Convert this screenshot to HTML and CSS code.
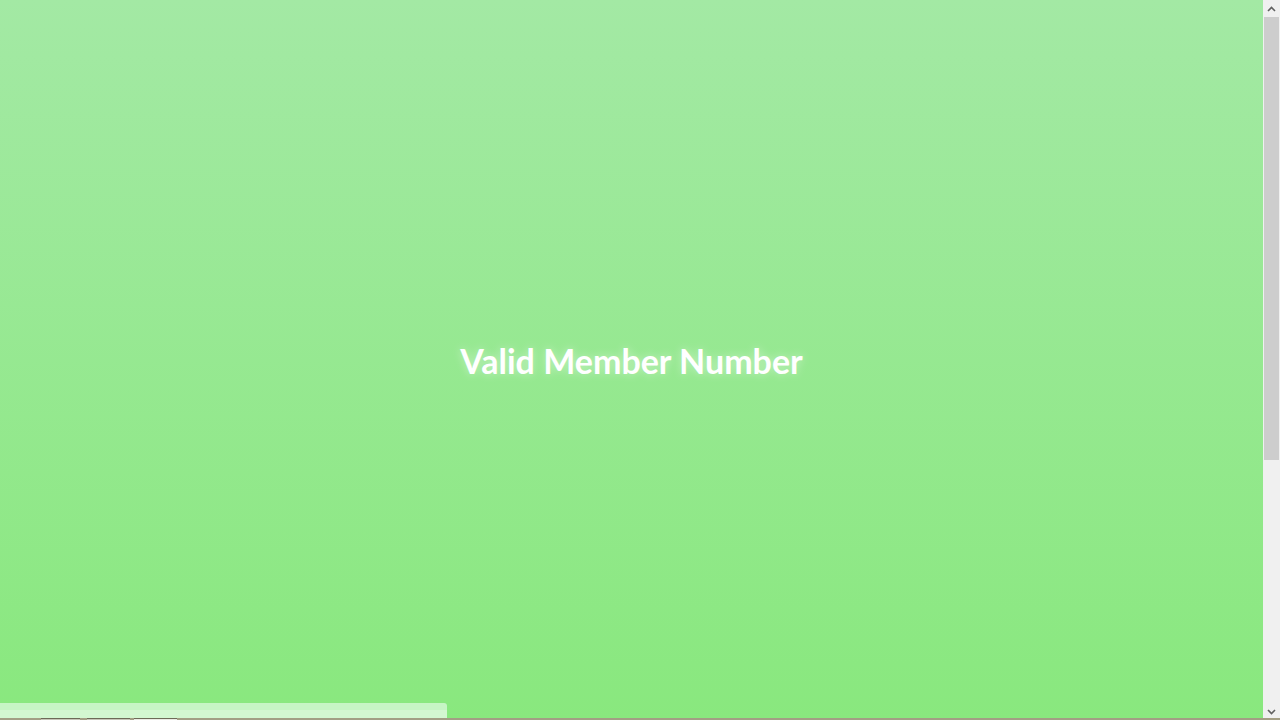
FILE: index.html
```html
<!DOCTYPE html>
<html lang="en">
<head>
<meta charset="utf-8">
<title>Valid Member Number</title>
<link rel="stylesheet" href="styles.css">
</head>
<body>
<div class="app">
  <main class="screen">
    <h1 class="message">Valid Member Number</h1>
    <div class="tray">
      <div class="tray-bar"></div>
      <div class="tray-tabs">
        <span class="tab tab-a"></span>
        <span class="tab tab-b"></span>
        <span class="tab tab-c"></span>
      </div>
    </div>
  </main>
  <div class="scrollbar" aria-hidden="true">
    <div class="sb-btn">
      <svg width="9" height="6" viewBox="0 0 9 6"><path d="M1 5 L4.5 1.5 L8 5" fill="none" stroke="#606060" stroke-width="1.6"/></svg>
    </div>
    <div class="sb-track">
      <div class="sb-thumb"></div>
    </div>
    <div class="sb-btn">
      <svg width="9" height="6" viewBox="0 0 9 6"><path d="M1 1 L4.5 4.5 L8 1" fill="none" stroke="#606060" stroke-width="1.6"/></svg>
    </div>
  </div>
</div>
</body>
</html>
```
FILE: styles.css
```css
body {
  margin: 0;
  background: #89e87e;
  font-family: Lato, "Noto Sans", sans-serif;
}
.app {
  height: 720px;
  display: grid;
  grid-template-columns: 1fr 17px;
  overflow: hidden;
}
.screen {
  position: relative;
  display: flex;
  align-items: center;
  justify-content: center;
  background: linear-gradient(to bottom, #a3e9a4 0%, #89e87e 100%);
}
.message {
  margin: 0;
  color: #ffffff;
  font-size: 34px;
  font-weight: 700;
  text-shadow: 0 0 10px rgba(255, 255, 255, 0.45);
}
.tray {
  position: absolute;
  left: 0;
  right: -17px;
  bottom: 0;
}
.tray-bar {
  width: 447px;
  height: 15px;
  border-radius: 0 3px 0 0;
  background: linear-gradient(to bottom, #c6f5c4 0%, #c6f5c4 47%, #d3f7d0 47%, #d3f7d0 100%);
}
.tray-tabs {
  height: 2px;
  background: #a39e84;
  display: flex;
  padding-left: 41px;
  gap: 4px;
}
.tab {
  height: 1px;
  border-top: 1px solid #6e6a58;
  background: #c8c6b8;
}
.tab-a { width: 39px; }
.tab-b { width: 43px; margin-left: 3px; }
.tab-c { width: 43px; background: #ecebe4; }

.scrollbar {
  display: flex;
  flex-direction: column;
  background: #f0f0f0;
}
.sb-btn {
  height: 17px;
  display: flex;
  align-items: center;
  justify-content: center;
  flex: none;
}
.sb-track {
  flex: 1;
  padding: 0 1px;
}
.sb-thumb {
  height: 443px;
  background: #cdcdcd;
}
```
